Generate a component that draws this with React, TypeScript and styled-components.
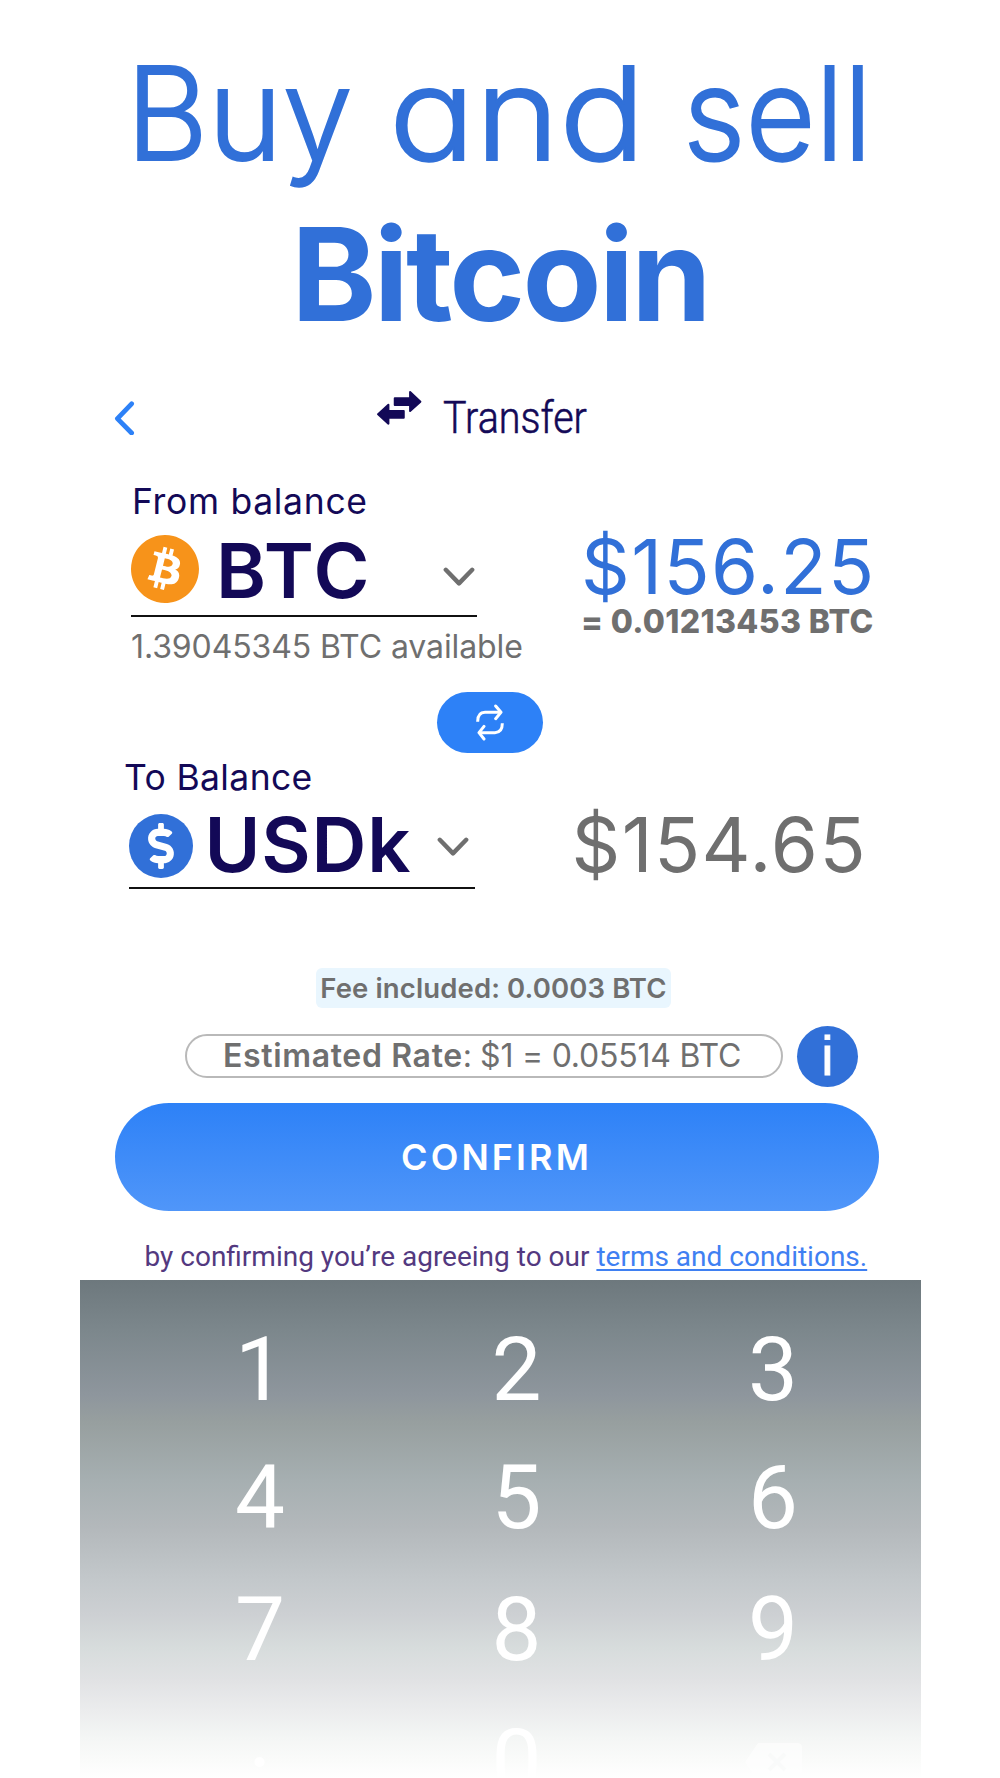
import React from "react";
import styled, { createGlobalStyle } from "styled-components";
import { SiBitcoin } from "react-icons/si";
import { FaDollarSign } from "react-icons/fa";

const colors = {
  brand: "#3170d8",
  bright: "#2d81f7",
  navy: "#130957",
  grey: "#6f6f6f",
  orange: "#f7931a",
};

const GlobalStyle = createGlobalStyle`
  * { box-sizing: border-box; }
  body { margin: 0; background: #fff; }
  button { border: 0; padding: 0; background: none; font: inherit; color: inherit; cursor: pointer; }
  svg { display: block; flex: none; }
`;

const Screen = styled.main`
  display: flex;
  flex-direction: column;
  width: 1000px;
  height: 1778px;
  overflow: hidden;
  background: #fff;
  font-family: Inter, "Liberation Sans", sans-serif;

  > * {
    flex: none;
  }
`;

const Hero = styled.h1`
  height: 355px;
  margin: 0;
  padding-top: 33px;
  font-size: 129px;
  line-height: 161px;
  color: ${colors.brand};
  font-feature-settings: "cv11";
`;

const LightLine = styled.span`
  display: grid;
  grid-template-columns: 263px 294px auto;
  padding-left: 126px;
  font-weight: 300;
  -webkit-text-stroke: 1.9px ${colors.brand};
`;

const Word = styled.span<{ $stretch: number }>`
  justify-self: start;
  transform: scaleX(${(p) => p.$stretch});
  transform-origin: left;
`;

const BoldLine = styled.span`
  display: block;
  text-align: center;
  font-weight: 700;
  letter-spacing: -2.7px;
`;

const Text = styled.span<{
  $size: number;
  $weight?: number;
  $color?: string;
  $spacing?: number;
}>`
  display: block;
  white-space: nowrap;
  line-height: 1;
  font-size: ${(p) => p.$size}px;
  font-weight: ${(p) => p.$weight ?? 400};
  color: ${(p) => p.$color ?? colors.grey};
  letter-spacing: ${(p) => p.$spacing ?? 0}px;
`;

const Label = styled(Text)`
  margin-left: 1px;
`;

const Header = styled.header`
  display: flex;
  align-items: flex-start;
  height: 115px;
  padding: 36px 0 0 114px;
`;

const BackButton = styled.button`
  margin-top: 10px;
`;

const HeaderTitle = styled.div`
  display: flex;
  align-items: flex-start;
  gap: 21px;
  margin-left: 242px;
`;

const TitleText = styled.h2`
  margin: 4px 0 0;
  font: 300 45px/1 Roboto, sans-serif;
  color: ${colors.navy};
  -webkit-text-stroke: 0.6px ${colors.navy};
  transform: scaleX(0.877);
  transform-origin: left;
`;

const Balance = styled.section<{ $height: number; $top: number }>`
  display: grid;
  grid-template-columns: 450px 1fr;
  height: ${(p) => p.$height}px;
  padding: ${(p) => p.$top}px 0 0 131px;
`;

const Column = styled.div<{ $top?: number; $shift?: number }>`
  display: flex;
  flex-direction: column;
  align-items: flex-start;
  gap: 2px;
  margin-left: ${(p) => p.$shift ?? 0}px;
  padding-top: ${(p) => p.$top ?? 0}px;
`;

const AssetSelect = styled.button<{ $height: number; $top: number; $bottom?: number }>`
  display: flex;
  align-items: flex-start;
  width: 346px;
  height: ${(p) => p.$height}px;
  margin: ${(p) => p.$top}px 0 ${(p) => p.$bottom ?? 0}px;
  padding-right: 2px;
  border-bottom: 2.5px solid #111;
`;

const Symbol = styled(Text)<{ $left: number; $top: number }>`
  margin: ${(p) => p.$top}px 0 0 ${(p) => p.$left}px;
`;

const DollarCoin = styled.span`
  display: flex;
  align-items: center;
  justify-content: center;
  width: 64px;
  height: 64px;
  border-radius: 50%;
  background: ${colors.brand};
  color: #fff;
`;

const ChevronBox = styled.span<{ $top: number; $right?: number }>`
  margin: ${(p) => p.$top}px ${(p) => p.$right ?? 0}px 0 auto;
`;

const SwapButton = styled.button`
  display: flex;
  align-items: center;
  justify-content: center;
  width: 106px;
  height: 61px;
  margin: 12px 0 0 437px;
  border-radius: 31px;
  background: ${colors.bright};
`;

const FeeTag = styled.div`
  display: flex;
  align-items: center;
  justify-content: center;
  width: 355px;
  height: 40px;
  margin: 0 0 18px 316px;
  padding-top: 2px;
  border-radius: 6px;
  background: #e9f6fe;
`;

const RateRow = styled.div`
  display: flex;
  gap: 14px;
  height: 77px;
  padding-left: 185px;
`;

const RatePill = styled.div`
  display: flex;
  width: 598px;
  height: 44px;
  margin-top: 7.5px;
  padding: 4px 0 0 36px;
  border: 2px solid #b9b9b9;
  border-radius: 22px;
`;

const RateValue = styled(Text)`
  margin-left: 8px;
`;

const InfoButton = styled.button`
  display: flex;
  justify-content: center;
  width: 61px;
  height: 61px;
  padding-top: 3px;
  border-radius: 50%;
  background: ${colors.brand};
  color: #fff;
  font: 55.5px/1 "Liberation Sans", Arial, sans-serif;
  -webkit-text-stroke: 0.8px #fff;
`;

const ConfirmButton = styled.button`
  display: flex;
  align-items: center;
  justify-content: center;
  width: 764px;
  height: 108px;
  margin-left: 115px;
  padding-right: 1px;
  border-radius: 54px;
  background: linear-gradient(#2d81f7, #5096f9);
`;

const Terms = styled.p`
  height: 69px;
  margin: 0;
  padding: 31.5px 0 0 144.5px;
  font: 28px/1 Roboto, sans-serif;
  white-space: nowrap;
  color: #53397f;
`;

const TermsLink = styled.a`
  color: #3f80f2;
  text-decoration: underline;
  text-decoration-thickness: 1.5px;
  text-underline-offset: 3px;
  text-decoration-skip-ink: none;
`;

const Keypad = styled.div`
  display: grid;
  grid-template-columns: repeat(3, 256.5px);
  grid-template-rows: 126px 130px 134px 130px;
  width: 841px;
  height: 498px;
  margin-left: 80px;
  padding: 26.6px 0 0 51.75px;
  overflow: hidden;
  background: linear-gradient(
    #6d787d 0,
    #7c878c 50px,
    #8e969d 115px,
    #979f9f 142px,
    #a6afb1 200px,
    #b3b8bb 247px,
    #c3c8cb 300px,
    #cdd0d3 335px,
    #d7dcdc 368px,
    #e1e2e4 400px,
    #ebeced 430px,
    #f4f6f5 458px,
    #fafbfa 480px,
    #fff 498px
  );
`;

const Key = styled.button<{ $raised?: boolean; $faded?: boolean }>`
  display: flex;
  align-items: center;
  justify-content: center;
  padding-bottom: ${(p) => (p.$raised ? 53 : 0)}px;
  font: 89px/1 Roboto, sans-serif;
  color: #fff;
  opacity: ${(p) => (p.$faded ? 0.6 : 1)};
`;

const Chevron = () => (
  <svg width="32" height="20" viewBox="0 0 32 20" fill="none">
    <path d="M2.8 2.8 16 16.4 29.2 2.8" stroke="#6f6f6f" strokeWidth="4.4" strokeLinecap="round" strokeLinejoin="round" />
  </svg>
);

const BackIcon = () => (
  <svg width="21" height="34" viewBox="0 0 21 34" fill="none">
    <path d="M17.6 2.8 3.4 17.6 17.6 32" stroke={colors.bright} strokeWidth="4.8" strokeLinecap="round" strokeLinejoin="round" />
  </svg>
);

const TransferIcon = () => (
  <svg width="44.5" height="34" viewBox="0 0 133 102">
    <g fill={colors.navy} stroke={colors.navy} strokeWidth="6" strokeLinejoin="round">
      <path d="M53 22H99V3L130 32 99 60V42H53Z" />
      <path d="M80 60H34V41L3 70 34 98V80H80Z" />
    </g>
  </svg>
);

const SwapIcon = () => (
  <svg width="28" height="37" viewBox="0 0 84 111" fill="none" stroke="#fff" strokeWidth="9">
    <path d="M5 53C5 35 12 25 27 25H74" />
    <path d="M59 6 75 25 59 44" strokeLinecap="round" strokeLinejoin="round" />
    <path d="M79 58C79 76 72 86 57 86H10" />
    <path d="M24 67 9 86 24 105" strokeLinecap="round" strokeLinejoin="round" />
  </svg>
);

const BackspaceIcon = () => (
  <svg width="57" height="38" viewBox="0 0 57 38">
    <path d="M13 0H52Q57 0 57 5V33Q57 38 52 38H13L0 19Z" fill="#fff" />
    <path d="M24 11 40 27M40 11 24 27" stroke="#f9fafa" strokeWidth="4" />
  </svg>
);

export default function App() {
  return (
    <Screen>
      <GlobalStyle />
      <Hero>
        <LightLine>
          <Word $stretch={0.98}>Buy </Word>
          <Word $stretch={1.109}>and </Word>
          <Word $stretch={0.937}>sell </Word>
        </LightLine>
        <BoldLine>Bitcoin</BoldLine>
      </Hero>

      <Header>
        <BackButton aria-label="Back">
          <BackIcon />
        </BackButton>
        <HeaderTitle>
          <TransferIcon />
          <TitleText>Transfer</TitleText>
        </HeaderTitle>
      </Header>

      <Balance $height={210} $top={13.5}>
        <Column>
          <Label $size={35.5} $color={colors.navy} $spacing={0.68}>From balance</Label>
          <AssetSelect $height={82} $top={13.5} $bottom={12}>
            <SiBitcoin size={68} color={colors.orange} />
            <Symbol $size={76} $weight={600} $color={colors.navy} $spacing={2} $left={17} $top={-3}>BTC</Symbol>
            <ChevronBox $top={32}>
              <Chevron />
            </ChevronBox>
          </AssetSelect>
          <Text $size={32} $spacing={-0.1}>1.39045345 BTC available</Text>
        </Column>
        <Column $top={44}>
          <Text $size={76} $color={colors.brand} $spacing={1.4}>$156.25</Text>
          <Text $size={32} $weight={800} $spacing={0.35}>= 0.01213453 BTC</Text>
        </Column>
      </Balance>

      <SwapButton aria-label="Swap">
        <SwapIcon />
      </SwapButton>

      <Balance $height={215} $top={7}>
        <Column $shift={-7}>
          <Text $size={35.5} $color={colors.navy} $spacing={0.36}>To Balance</Text>
          <Column $shift={5}>
            <AssetSelect $height={74.5} $top={16.5}>
              <DollarCoin>
                <FaDollarSign size={46} />
              </DollarCoin>
              <Symbol $size={76} $weight={600} $color={colors.navy} $spacing={0.8} $left={11.5} $top={-8}>USDk</Symbol>
              <ChevronBox $top={23} $right={4}>
                <Chevron />
              </ChevronBox>
            </AssetSelect>
          </Column>
        </Column>
        <Column $top={46} $shift={-9.5}>
          <Text $size={76} $spacing={1.4}>$154.65</Text>
        </Column>
      </Balance>

      <FeeTag>
        <Text $size={27.5} $weight={600} $spacing={0.12}>Fee included: 0.0003 BTC</Text>
      </FeeTag>
      <RateRow>
        <RatePill>
          <Text $size={32} $weight={600} $spacing={0.65}>Estimated Rate</Text>
          <Text $size={32}>:</Text>
          <RateValue $size={32} $spacing={-0.22}>$1 = 0.05514 BTC</RateValue>
        </RatePill>
        <InfoButton>i</InfoButton>
      </RateRow>

      <ConfirmButton>
        <Text $size={36} $weight={600} $color="#fff" $spacing={3.07}>CONFIRM</Text>
      </ConfirmButton>
      <Terms>
        by confirming you’re agreeing to our <TermsLink>terms and conditions.</TermsLink>
      </Terms>

      <Keypad>
        {["1", "2", "3", "4", "5", "6", "7", "8", "9"].map((digit) => (
          <Key key={digit}>{digit}</Key>
        ))}
        <Key $raised>.</Key>
        <Key>0</Key>
        <Key $faded aria-label="Delete">
          <BackspaceIcon />
        </Key>
      </Keypad>
    </Screen>
  );
}
